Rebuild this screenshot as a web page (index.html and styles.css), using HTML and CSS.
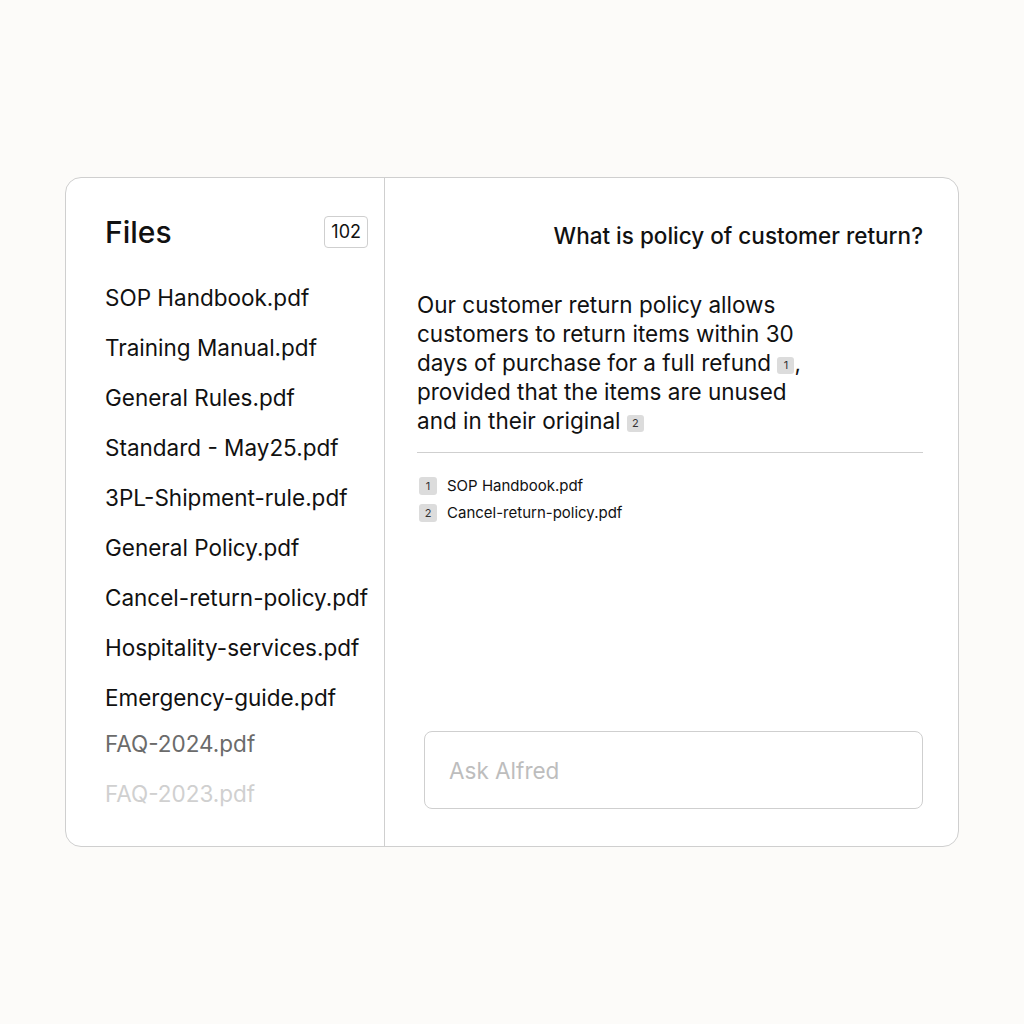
FILE: index.html
```html
<!DOCTYPE html>
<html>
<head>
<meta charset="utf-8">
<link rel="stylesheet" href="styles.css">
</head>
<body>
<div class="card">
  <aside class="files">
    <div class="files-head">
      <h1 class="files-title">Files</h1>
      <span class="count">102</span>
    </div>
    <ul class="file-list">
      <li>SOP Handbook.pdf</li>
      <li>Training Manual.pdf</li>
      <li>General Rules.pdf</li>
      <li>Standard - May25.pdf</li>
      <li>3PL-Shipment-rule.pdf</li>
      <li>General Policy.pdf</li>
      <li>Cancel-return-policy.pdf</li>
      <li>Hospitality-services.pdf</li>
      <li>Emergency-guide.pdf</li>
      <li class="fade1">FAQ-2024.pdf</li>
      <li class="fade2">FAQ-2023.pdf</li>
    </ul>
  </aside>
  <main class="chat">
    <div class="question">What is policy of customer return?</div>
    <p class="answer">Our customer return policy allows customers to return items within 30 days of purchase for a full refund <span class="cite">1</span>, provided that the items are unused and in their original <span class="cite">2</span></p>
    <hr class="divider">
    <ul class="sources">
      <li><span class="src-num">1</span>SOP Handbook.pdf</li>
      <li><span class="src-num">2</span>Cancel-return-policy.pdf</li>
    </ul>
    <div class="spacer"></div>
    <div class="ask">Ask Alfred</div>
  </main>
</div>
</body>
</html>
```
FILE: styles.css
```css
* { box-sizing: border-box; }
html, body { margin: 0; padding: 0; }
body {
  background: #fcfbf9;
  font-family: Inter, "Noto Sans", sans-serif;
  color: #111;
  width: 1024px;
  height: 1024px;
}
.card {
  margin: 177px 0 0 65px;
  width: 894px;
  height: 670px;
  background: #fff;
  border: 1px solid #cfcfcf;
  border-radius: 16px;
  display: flex;
  overflow: hidden;
}
.files {
  width: 319px;
  border-right: 1px solid #cfcfcf;
  padding: 36px 16px 0 39px;
}
.files-head {
  display: flex;
  justify-content: space-between;
  align-items: center;
}
.files-title {
  margin: 0;
  font-size: 30px;
  font-weight: 500;
  line-height: 36px;
}
.count {
  border: 1px solid #cfcfcf;
  border-radius: 4px;
  font-size: 18px;
  line-height: 30px;
  padding: 0 6px;
  height: 32px;
  color: #111;
}
.file-list {
  list-style: none;
  margin: 23px 0 0 0;
  padding: 0;
}
.file-list li {
  font-size: 22.5px;
  line-height: 50px;
  height: 50px;
  white-space: nowrap;
}
.file-list li.fade1 { color: #6b6b6b; height: 46px; line-height: 42px; }
.file-list li.fade2 { color: #d0d0d0; }
.chat {
  flex: 1;
  display: flex;
  flex-direction: column;
  padding: 44px 35px 37px 32px;
}
.question {
  text-align: right;
  font-size: 22.5px;
  font-weight: 500;
  line-height: 28px;
}
.answer {
  margin: 40px 0 0 0;
  width: 392px;
  font-size: 22.5px;
  line-height: 29px;
}
.cite {
  display: inline-block;
  width: 17px;
  height: 17px;
  background: #dcdcdc;
  border-radius: 3px;
  font-size: 11px;
  line-height: 17px;
  text-align: center;
  vertical-align: 2px;
  color: #333;
}
.divider {
  border: 0;
  border-top: 1px solid #cfcfcf;
  margin: 17px 0 0 0;
}
.sources {
  list-style: none;
  margin: 19px 0 0 0;
  padding: 0 0 0 2px;
}
.sources li {
  display: flex;
  align-items: center;
  font-size: 15px;
  line-height: 27px;
  height: 27px;
}
.src-num {
  display: inline-block;
  width: 18px;
  height: 18px;
  background: #dcdcdc;
  border-radius: 3px;
  font-size: 11px;
  line-height: 18px;
  text-align: center;
  margin-right: 10px;
  color: #333;
}
.spacer { flex: 1; }
.ask {
  margin-left: 7px;
  height: 78px;
  border: 1px solid #cfcfcf;
  border-radius: 8px;
  padding: 0 24px;
  display: flex;
  align-items: center;
  font-size: 22.5px;
  color: #bdbdbd;
}
```
